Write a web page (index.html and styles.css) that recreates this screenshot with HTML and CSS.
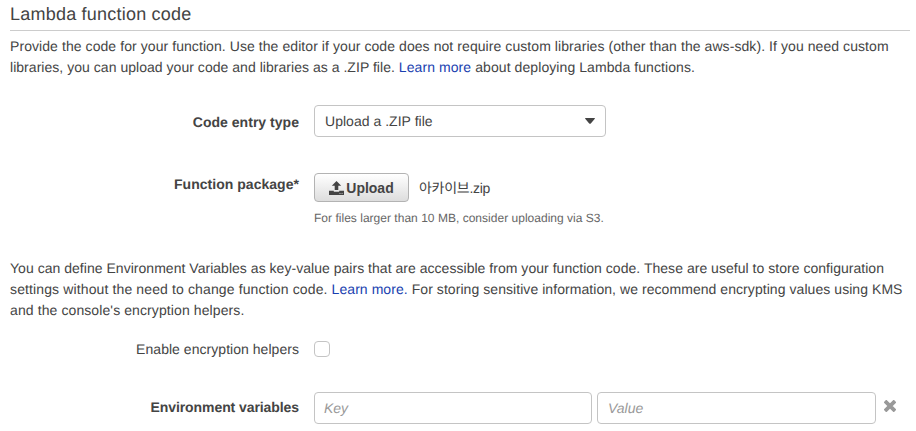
FILE: index.html
```html
<!DOCTYPE html>
<html lang="en">
<head>
<meta charset="utf-8">
<title>Lambda function code</title>
<link rel="stylesheet" href="styles.css">
</head>
<body>
<main>
  <h2>Lambda function code</h2>
  <p class="intro"><span class="l1">Provide the code for your function. Use the editor if your code does not require custom libraries (other than the aws-sdk). If you need custom</span><br><span class="l2">libraries, you can upload your code and libraries as a .ZIP file. </span><span class="l2-end"><a>Learn more</a> about deploying Lambda functions.</span></p>
  <div class="row entry">
    <label>Code entry type</label>
    <div class="select"><span>Upload a .ZIP file</span><svg width="10" height="6" viewBox="0 0 10 6"><path d="M0.6 0h8.8q1 .3 .2 1.1L5.8 5.5q-.8.7-1.6 0L.4 1.1Q-.4.3.6 0z" fill="#444"/></svg></div>
  </div>
  <div class="row package">
    <label>Function package*</label>
    <div class="upload">
      <div class="file"><button type="button"><svg width="15" height="14" viewBox="0 0 15 14"><path d="M7.5 0l4.7 4.7H9.3V9H5.7V4.7H2.8zM0 9.7h4.8v1h5.4v-1H15V14H0z" fill="#444"/><path d="M10.5 12h1v1h-1zM12.6 12h1v1h-1z" fill="#bbb"/></svg><span>Upload</span></button><span class="filename">아카이브.zip</span></div>
      <small>For files larger than 10 MB, consider uploading via S3.</small>
    </div>
  </div>
  <p class="env"><span class="l3">You can define Environment Variables as key-value pairs that are accessible from your function code. These are useful to store configuration</span><br><span class="l4">settings without the need to change function code. </span><span class="l4-end"><a>Learn more.</a> For storing sensitive information, we recommend encrypting values using KMS</span><br><span class="l5">and the console's encryption helpers.</span></p>
  <div class="row encryption"><label>Enable encryption helpers</label><span class="check"></span></div>
  <div class="row variables"><label>Environment variables</label><div class="field">Key</div><div class="field second">Value</div><svg class="remove" width="12" height="12" viewBox="0 0 12 12"><path d="M2.3 2.3l7.4 7.4M9.7 2.3l-7.4 7.4" stroke="#999" stroke-width="3.8" stroke-linecap="square"/></svg></div>
</main>
</body>
</html>
```
FILE: styles.css
```css
* { box-sizing: border-box; }
body { margin: 0; background: #fff; color: #444; font: 14px/21px "Liberation Sans", "Noto Sans CJK KR", sans-serif; text-rendering: geometricPrecision; }
main { width: 916px; height: 431px; padding: 0 6px 0 10px; overflow: hidden; }
h2 { margin: 0 0 5px; height: 31px; padding-top: 3px; border-bottom: 1px solid #ccc; font-size: 18px; font-weight: 400; line-height: 22px; letter-spacing: .22px; }
p { margin: 0; white-space: nowrap; }
a { color: #1a3fb0; }
.l1 { letter-spacing: .072px; }
.l2 { letter-spacing: .035px; }
.l2-end { letter-spacing: .08px; }
.l3 { letter-spacing: .03px; }
.l4 { letter-spacing: .125px; }
.l4-end { letter-spacing: .06px; }
.l5 { letter-spacing: .1px; }
.row { display: flex; }
label { width: 289px; margin-right: 15px; text-align: right; font-weight: 700; }
.entry { margin-top: 27px; height: 32px; align-items: center; }
.entry label { padding-top: 2px; letter-spacing: .03px; }
.select { display: flex; width: 292px; height: 32px; padding: 0 10px; align-items: center; justify-content: space-between; border: 1px solid #c4c4c4; border-radius: 4px; letter-spacing: .03px; }
.package { margin-top: 36px; height: 58px; }
.package label { padding-top: 1px; letter-spacing: .03px; }
.file { display: flex; align-items: center; height: 29px; }
button { display: flex; width: 95px; height: 29px; padding: 0; align-items: center; justify-content: center; gap: 2px; border: 1px solid #b3b3b3; border-radius: 4px; background: linear-gradient(#fff, #ddd); color: #444; font: bold 14px "Liberation Sans", sans-serif; }
.filename { margin-left: 10px; padding-top: 1px; letter-spacing: -.28px; }
small { display: block; margin-top: 7px; color: #666; font-size: 12px; line-height: 18px; letter-spacing: .02px; }
.env { margin-top: 26px; padding-top: 1px; }
.encryption { margin-top: 18px; align-items: center; }
.encryption label { font-weight: 400; letter-spacing: .04px; }
.check { width: 16px; height: 16px; margin-top: -1px; border: 1px solid #c4c4c4; border-radius: 4px; }
.variables { margin-top: 32px; align-items: center; }
.variables label { padding-bottom: 2px; letter-spacing: -.08px; }
.field { width: 278px; height: 32px; padding: 5px 9px; border: 1px solid #c4c4c4; border-radius: 4px; color: #999; font-style: italic; }
.second { width: 279px; margin-left: 5px; padding-left: 10px; }
.remove { margin: 0 0 4px 8px; }
```
